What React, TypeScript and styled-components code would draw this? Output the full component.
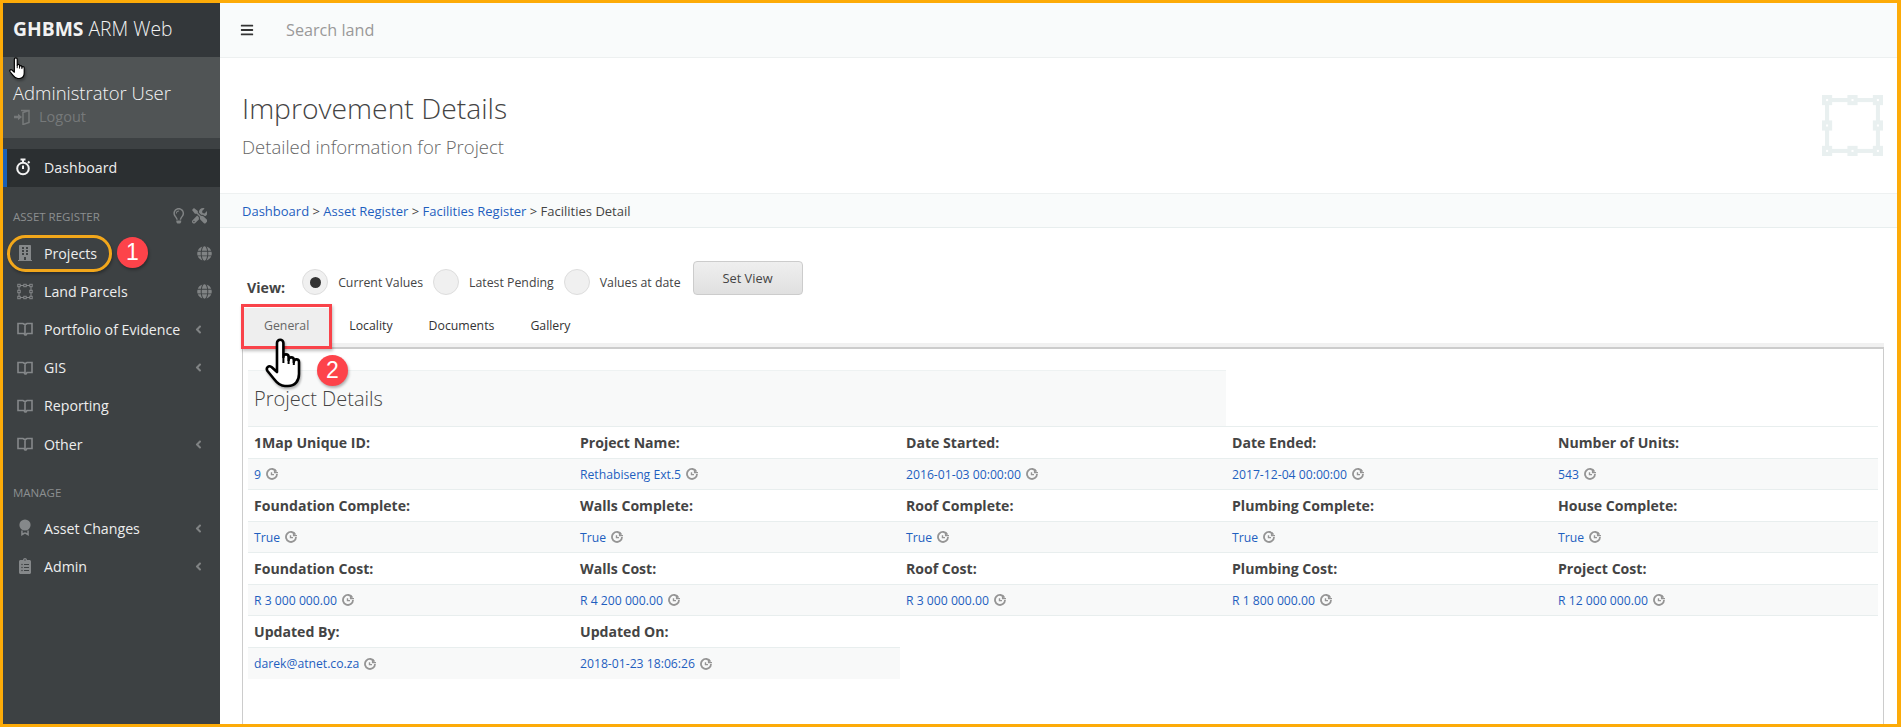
import React from 'react'
import styled, { createGlobalStyle } from 'styled-components'
import { FaAngleLeft, FaBars, FaBuilding, FaClipboardList, FaGlobe, FaRegLightbulb, FaTools } from 'react-icons/fa'

const GlobalStyle = createGlobalStyle`
  html, body {
    margin: 0;
    padding: 0;
    background: #fff;
  }
  body {
    font-family: "Open Sans", "Noto Sans", sans-serif;
    color: #444;
  }
  * {
    box-sizing: border-box;
  }
`

const Frame = styled.div`
  position: relative;
  display: flex;
  width: 1901px;
  height: 727px;
  overflow: hidden;
  border: solid #fdab08;
  border-width: 3px 4px 3px 3px;
  background: #fff;
`

const Sidebar = styled.aside`
  display: flex;
  flex-direction: column;
  width: 217px;
  flex: none;
  background: #3d4143;
`

const Brand = styled.div`
  height: 54px;
  padding: 14px 10px 0;
  font-size: 19.3px;
  line-height: 24px;
  font-weight: 300;
  color: #f2f2f2;
  background: #33373a;
  b {
    font-weight: 700;
  }
`

const UserPanel = styled.div`
  height: 81px;
  padding: 24px 10px 0;
  background: #505455;
`

const UserName = styled.div`
  font-size: 18.5px;
  line-height: 24px;
  font-weight: 300;
  color: #f5f5f5;
`

const Logout = styled.div`
  display: flex;
  align-items: center;
  gap: 9px;
  margin-top: 3px;
  font-size: 14.5px;
  line-height: 18px;
  color: #76797a;
`

const ActiveItem = styled.div`
  display: flex;
  align-items: center;
  gap: 13px;
  height: 38px;
  margin-top: 11px;
  padding: 0 0 2px 8px;
  font-size: 14.2px;
  color: #eee;
  background: #2b2f31;
  border-left: 4px solid #1c5fb4;
`

const SectionHead = styled.div<{ $top: number; $height: number }>`
  display: flex;
  align-items: center;
  justify-content: space-between;
  height: ${({ $height }) => $height}px;
  margin-top: ${({ $top }) => $top}px;
  padding: 1px 13px 0 10px;
  font-size: 11.5px;
  color: #8c8f90;
`

const HeadIcons = styled.span`
  display: flex;
  align-items: center;
  gap: 5px;
  font-size: 15.5px;
  color: #808384;
`

const NavRow = styled.div`
  display: flex;
  align-items: center;
  height: 38.2px;
  padding: 0 8px 0 14px;
  font-size: 14.2px;
  color: #eee;
`

const NavIcon = styled.span`
  display: flex;
  align-items: center;
  justify-content: center;
  width: 16px;
  margin-right: 11px;
  font-size: 16px;
  color: #85888a;
`

const NavLabel = styled.span`
  flex: 1;
  white-space: nowrap;
`

const NavMark = styled.span<{ $end?: boolean }>`
  display: flex;
  justify-content: ${({ $end }) => ($end ? 'flex-end' : 'flex-start')};
  width: 20px;
  font-size: ${({ $end }) => ($end ? 15 : 13)}px;
  color: #808384;
`

const Main = styled.main`
  display: flex;
  flex-direction: column;
  flex: 1;
  min-width: 0;
`

const TopBar = styled.div`
  display: flex;
  align-items: center;
  flex: none;
  height: 55px;
  padding-left: 20px;
  font-size: 14px;
  color: #333;
  background: #f9fbfb;
  border-bottom: 1px solid #edf0f0;
`

const Search = styled.span`
  margin-left: 32px;
  font-size: 16.2px;
  color: #999;
`

const TitleBand = styled.div`
  display: flex;
  align-items: center;
  justify-content: space-between;
  flex: none;
  height: 135px;
  padding: 0 14px 0 22px;
`

const TitleBlock = styled.div`
  margin-bottom: 3px;
`

const Title = styled.h1`
  margin: 0;
  font-size: 28.3px;
  line-height: 36px;
  font-weight: 300;
  color: #444;
`

const Subtitle = styled.div`
  margin-top: 10px;
  font-size: 18.5px;
  line-height: 22px;
  font-weight: 300;
  color: #666;
`

const Breadcrumb = styled.div`
  flex: none;
  height: 35px;
  padding-left: 22px;
  font-size: 13px;
  line-height: 34px;
  color: #444;
  background: #f9fbfb;
  border-top: 1px solid #eef1f1;
  border-bottom: 1px solid #e8eeee;
  a {
    color: #1f5fbf;
  }
`

const ViewRow = styled.div`
  display: flex;
  flex: none;
  height: 43px;
  margin-top: 33px;
  padding-left: 27px;
  font-size: 12.3px;
  color: #444;
`

const ViewLabel = styled.b`
  margin: 17px 17px 0 0;
  font-size: 14.2px;
  line-height: 20px;
  font-weight: 700;
`

const RadioOption = styled.label`
  display: flex;
  align-items: center;
  gap: 10px;
  height: 26px;
  margin: 8px 10px 0 0;
  white-space: nowrap;
`

const RadioCircle = styled.span<{ $checked?: boolean }>`
  display: flex;
  align-items: center;
  justify-content: center;
  width: 26px;
  height: 26px;
  border: 1px solid #ddd;
  border-radius: 50%;
  background: #f0f0f0;
  &::after {
    content: '';
    display: ${({ $checked }) => ($checked ? 'block' : 'none')};
    width: 11px;
    height: 11px;
    border-radius: 50%;
    background: #333;
  }
`

const SetView = styled.button`
  width: 110px;
  height: 34px;
  margin-left: 2px;
  padding: 0 0 1px;
  font-family: inherit;
  font-size: 12.8px;
  color: #444;
  background: linear-gradient(#efefef, #e0e0e0);
  border: 1px solid #ccc;
  border-radius: 4px;
`

const TabStrip = styled.div`
  display: flex;
  flex: none;
  height: 45px;
  margin: 0 13px 0 22px;
  padding-top: 4px;
  background: linear-gradient(transparent 39px, #f1f1f1 39px);
  border-bottom: 2px solid #ccc;
`

const Tab = styled.div<{ $active?: boolean }>`
  padding: 0 ${({ $active }) => ($active ? 22 : 18)}px;
  font-size: 12.3px;
  line-height: 35px;
  color: ${({ $active }) => ($active ? '#666' : '#333')};
  background: ${({ $active }) => ($active ? '#eee' : 'transparent')};
`

const Panel = styled.section`
  flex: 1;
  margin: 0 13px 0 22px;
  padding: 21px 5px 0;
  border: solid #ccc;
  border-width: 0 1px;
`

const PanelHead = styled.h2`
  width: 978px;
  height: 56px;
  margin: 0;
  padding: 0 6px;
  font-size: 20px;
  line-height: 56px;
  font-weight: 300;
  color: #444;
  background: #f8f9f9;
  border-top: 1px solid #eef2f2;
`

const FieldGrid = styled.div`
  display: grid;
  grid-template-columns: repeat(5, 326px);
  grid-auto-rows: 63px;
  border-top: 1px solid #e8eeee;
`

const Field = styled.div``

const FieldLabel = styled.div`
  height: 32px;
  padding: 0 6px;
  font-size: 14.1px;
  line-height: 31px;
  font-weight: 700;
  color: #444;
  border-bottom: 1px solid #e8eeee;
`

const FieldValue = styled.div<{ $last?: boolean }>`
  display: flex;
  align-items: center;
  gap: 5px;
  height: 31px;
  padding: 0 6px;
  font-size: 12.2px;
  color: #1f5fbf;
  background: #f8f9f9;
  border-bottom: ${({ $last }) => ($last ? 'none' : '1px solid #e8eeee')};
`

const Overlay = styled.div<{ $x: number; $y: number }>`
  position: absolute;
  left: ${({ $x }) => $x - 3}px;
  top: ${({ $y }) => $y - 3}px;
`

const Ellipse = styled(Overlay)`
  width: 105px;
  height: 37px;
  border: 3px solid #f2a71b;
  border-radius: 19px;
  box-shadow: 1px 2px 3px rgba(0, 0, 0, 0.3);
`

const Badge = styled(Overlay)`
  display: flex;
  align-items: center;
  justify-content: center;
  width: 31px;
  height: 31px;
  font-family: "Liberation Sans", sans-serif;
  font-size: 23px;
  color: #fff;
  background: #fd434a;
  border-radius: 50%;
  box-shadow: 1px 2px 3px rgba(0, 0, 0, 0.3);
`

const RedBox = styled(Overlay)`
  width: 91px;
  height: 45px;
  border: 3px solid #f9434a;
  box-shadow: 1px 2px 3px rgba(0, 0, 0, 0.25);
`

const CursorWrap = styled(Overlay)`
  display: flex;
  filter: drop-shadow(1px 2px 1px rgba(0, 0, 0, 0.3));
`

function VectorSquare({ size, color }: { size: number; color: string }) {
  const a = 5
  const b = 30
  const c = 55
  const spots = [[a, a], [b, a], [c, a], [a, b], [c, b], [a, c], [b, c], [c, c]]
  return (
    <svg width={size} height={size} viewBox="0 0 60 60" fill="none">
      <rect x={a} y={a} width={c - a} height={c - a} stroke={color} strokeWidth="4" />
      {spots.map(([x, y]) => (
        <rect key={`${x}-${y}`} x={x - 3} y={y - 3} width="6" height="6" fill="#fff" stroke={color} strokeWidth="4" />
      ))}
    </svg>
  )
}

function SmallSquare() {
  return (
    <svg width="17" height="17" viewBox="0 0 16 16" fill="#3d4143" stroke="#85888a" strokeWidth="1">
      <rect x="2" y="2" width="12" height="12" />
      {[[2, 2], [14, 2], [2, 14], [14, 14], [2, 8], [14, 8], [8, 2], [8, 14]].map(([x, y]) => (
        <rect key={`${x}-${y}`} x={x - 1.2} y={y - 1.2} width="2.4" height="2.4" />
      ))}
    </svg>
  )
}

function BookIcon() {
  return (
    <svg width="17" height="16" viewBox="0 0 16 15" fill="none" stroke="#85888a" strokeWidth="1.6">
      <path d="M1 2h5l2 1.2L10 2h5v10h-5l-1 1.5h-1L7 12H1zM8 3.2V12.5" />
    </svg>
  )
}

function RosetteIcon() {
  return (
    <svg width="14" height="18" viewBox="0 0 14 18" fill="#85888a">
      <circle cx="7" cy="6" r="5.6" />
      <path d="M3.2 11.5v5.500L7 14.800l3.800 2.200v-5.500H9.300v2.600L7 13.300l-2.300 0.800v-2.600z" />
    </svg>
  )
}

function Stopwatch() {
  return (
    <svg width="16" height="18" viewBox="0 0 16 18" fill="none" stroke="#f2f2f2" strokeWidth="2">
      <circle cx="8" cy="10.5" r="5.8" />
      <path d="M5.5 1.5h5M8 2v3M8 7.5v3.5M13 3.5l1.5 1.5" />
    </svg>
  )
}

function DoorIcon() {
  return (
    <svg width="17" height="16" viewBox="0 0 17 16" fill="none" stroke="#76797a" strokeWidth="1.5">
      <path d="M8 1.5h8v12l-6 2V3.5l6-2" />
      <path d="M1 8h5" strokeWidth="2.5" />
      <path d="M5 4.8L9 8l-4 3.2z" fill="#76797a" stroke="none" />
    </svg>
  )
}

function HistoryIcon() {
  return (
    <svg width="12" height="12" viewBox="0 0 12 12" fill="none" stroke="#959595" strokeWidth="1.8">
      <path d="M10.4 3.6A5 5 0 1 0 11 6" />
      <path d="M8.6 1.2v3.4H12" strokeWidth="1.4" />
      <path d="M5.5 4.2V6.600H8" strokeWidth="1.4" />
    </svg>
  )
}

function HandCursor({ width }: { width: number }) {
  return (
    <svg width={width} viewBox="0 0 38 50" fill="#fff" stroke="#000" strokeWidth="2.6" strokeLinejoin="round">
      <path d="M12 30V5a3.2 3.2 0 0 1 6.4 0V19a2.6 2.6 0 0 1 5.2 0v3a2.6 2.6 0 0 1 5.2 0v2a2.6 2.6 0 0 1 5.2 0V36c0 7-4 12-11 12h-3c-5 0-8-3-11-7L2.5 33c-2-3 1-6 4-4L12 34Z" />
      <path d="M18.4 19v6M23.6 22v4M28.8 24v3" fill="none" strokeWidth="2" />
    </svg>
  )
}

type NavItem = { label: string; icon: React.ReactNode; globe?: boolean; chevron?: boolean }

const navTop: NavItem[] = [
  { label: 'Projects', icon: <FaBuilding />, globe: true },
  { label: 'Land Parcels', icon: <SmallSquare />, globe: true },
  { label: 'Portfolio of Evidence', icon: <BookIcon />, chevron: true },
  { label: 'GIS', icon: <BookIcon />, chevron: true },
  { label: 'Reporting', icon: <BookIcon /> },
  { label: 'Other', icon: <BookIcon />, chevron: true }
]

const navManage: NavItem[] = [
  { label: 'Asset Changes', icon: <RosetteIcon />, chevron: true },
  { label: 'Admin', icon: <FaClipboardList />, chevron: true }
]

const fields = [
  ['1Map Unique ID:', '9'],
  ['Project Name:', 'Rethabiseng Ext.5'],
  ['Date Started:', '2016-01-03 00:00:00'],
  ['Date Ended:', '2017-12-04 00:00:00'],
  ['Number of Units:', '543'],
  ['Foundation Complete:', 'True'],
  ['Walls Complete:', 'True'],
  ['Roof Complete:', 'True'],
  ['Plumbing Complete:', 'True'],
  ['House Complete:', 'True'],
  ['Foundation Cost:', 'R 3 000 000.00'],
  ['Walls Cost:', 'R 4 200 000.00'],
  ['Roof Cost:', 'R 3 000 000.00'],
  ['Plumbing Cost:', 'R 1 800 000.00'],
  ['Project Cost:', 'R 12 000 000.00'],
  ['Updated By:', 'darek@atnet.co.za'],
  ['Updated On:', '2018-01-23 18:06:26']
]

const renderNav = (items: NavItem[]) =>
  items.map(item => (
    <NavRow key={item.label}>
      <NavIcon>{item.icon}</NavIcon>
      <NavLabel>{item.label}</NavLabel>
      {item.globe && (
        <NavMark $end>
          <FaGlobe />
        </NavMark>
      )}
      {item.chevron && (
        <NavMark>
          <FaAngleLeft />
        </NavMark>
      )}
    </NavRow>
  ))

export default function App() {
  return (
    <Frame>
      <GlobalStyle />
      <Sidebar>
        <Brand>
          <b>GHBMS</b> ARM Web
        </Brand>
        <UserPanel>
          <UserName>Administrator User</UserName>
          <Logout>
            <DoorIcon />
            Logout
          </Logout>
        </UserPanel>
        <ActiveItem>
          <Stopwatch />
          Dashboard
        </ActiveItem>
        <SectionHead $top={10} $height={37}>
          ASSET REGISTER
          <HeadIcons>
            <FaRegLightbulb />
            <FaTools />
          </HeadIcons>
        </SectionHead>
        {renderNav(navTop)}
        <SectionHead $top={11} $height={35}>MANAGE</SectionHead>
        {renderNav(navManage)}
      </Sidebar>
      <Main>
        <TopBar>
          <FaBars />
          <Search>Search land</Search>
        </TopBar>
        <TitleBand>
          <TitleBlock>
            <Title>Improvement Details</Title>
            <Subtitle>Detailed information for Project</Subtitle>
          </TitleBlock>
          <VectorSquare size={61} color="#e9f0f0" />
        </TitleBand>
        <Breadcrumb>
          <a>Dashboard</a> &gt; <a>Asset Register</a> &gt; <a>Facilities Register</a> &gt; Facilities Detail
        </Breadcrumb>
        <ViewRow>
          <ViewLabel>View:</ViewLabel>
          <RadioOption>
            <RadioCircle $checked />
            Current Values
          </RadioOption>
          <RadioOption>
            <RadioCircle />
            Latest Pending
          </RadioOption>
          <RadioOption>
            <RadioCircle />
            Values at date
          </RadioOption>
          <SetView>Set View</SetView>
        </ViewRow>
        <TabStrip>
          <Tab $active>General</Tab>
          <Tab>Locality</Tab>
          <Tab>Documents</Tab>
          <Tab>Gallery</Tab>
        </TabStrip>
        <Panel>
          <PanelHead>Project Details</PanelHead>
          <FieldGrid>
            {fields.map(([label, value], i) => (
              <Field key={label}>
                <FieldLabel>{label}</FieldLabel>
                <FieldValue $last={i >= 15}>
                  {value}
                  <HistoryIcon />
                </FieldValue>
              </Field>
            ))}
          </FieldGrid>
        </Panel>
      </Main>
      <Ellipse $x={7} $y={235} />
      <Badge $x={117} $y={237}>1</Badge>
      <RedBox $x={241} $y={304} />
      <Badge $x={317} $y={355}>2</Badge>
      <CursorWrap $x={9} $y={57}>
        <HandCursor width={17} />
      </CursorWrap>
      <CursorWrap $x={265} $y={338}>
        <HandCursor width={38} />
      </CursorWrap>
    </Frame>
  )
}
